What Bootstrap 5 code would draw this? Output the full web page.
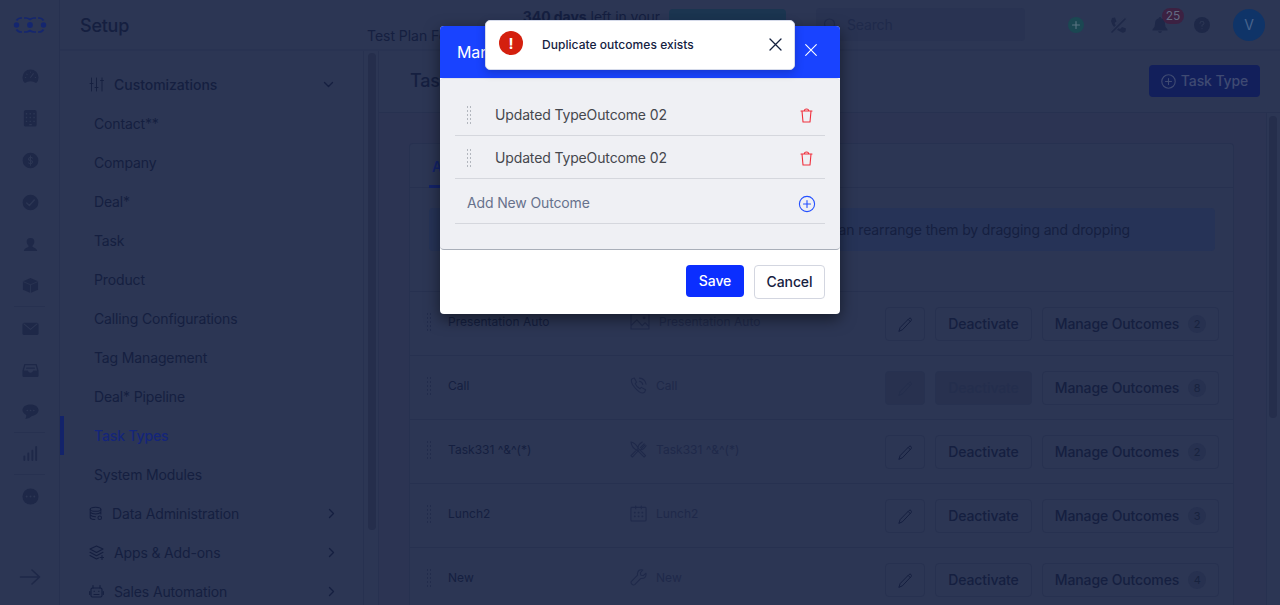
<!DOCTYPE html>
<html lang="en">
<head>
<meta charset="utf-8">
<meta name="viewport" content="width=device-width, initial-scale=1">
<title>Setup - Task Types</title>
<link href="https://cdn.jsdelivr.net/npm/bootstrap@5.3.0/dist/css/bootstrap.min.css" rel="stylesheet">
<style>
:root{--bg:#2c3654;--line:#273150;--ink:#151f40;--dim:#1f294a;--blue:#13236a}
html,body{height:100%}
body{font-family:Inter,"Liberation Sans",sans-serif;font-size:14px;line-height:20px;letter-spacing:-.14px;background:var(--bg);color:var(--ink);overflow:hidden}
svg{display:block;flex:none;fill:none;stroke:currentColor;stroke-width:1.1;stroke-linecap:round;stroke-linejoin:round}
svg .f{fill:currentColor;stroke:none}
svg .c{stroke:var(--bg)}
.rail{width:60px;border-right:1px solid var(--line);color:#1e2848;padding-top:16px}
.rail-item{height:42px;width:31px;padding-left:2px}
.rail-item svg{width:17px;height:17px}
.rail-line{border-bottom:1px solid var(--line)}
.topbar{height:51px;border-bottom:2px solid #293352;padding:0 15px 0 20px}
.page-name{font-size:18px;font-weight:500;width:287px;letter-spacing:-.25px;padding-top:2px}
.plan{width:293px;height:51px;padding-top:8px;line-height:19px;white-space:nowrap;overflow:hidden;letter-spacing:-.04px}
.upgrade{width:117px;height:30px;background:#1b3550;border-radius:4px;margin:0 0 1px 9px}
.search{width:209px;height:33px;margin-left:30px;background:#293352;border-radius:4px;color:#1f2a4b;padding-left:7px;gap:8px}
.bubble{left:10px;top:-9px;width:22px;height:16px;line-height:16px;font-size:12px;background:#3c2142;color:#636b82;border-radius:8px}
.avatar{width:32px;height:32px;background:#0f3468;color:#48638c;margin-left:23px}
.menu{width:304px;padding-top:14px;border-right:1px solid var(--line)}
.menu a{height:39px;color:var(--ink);text-decoration:none;display:flex;align-items:center;padding:0 29px 0 34px}
.menu a.grp{padding-left:29px;padding-right:27px}
.menu a.top-grp{font-weight:500;letter-spacing:-.03px;padding-right:29px}
.menu a.on{color:#14257a;font-weight:500;border-left:4px solid var(--blue);padding-left:30px}
.track{width:15px;border-right:1px solid var(--line);padding:2px 3px 0 4px}
.thumb{width:8px;background:#252e4c;border-radius:4px}
.titlebar{height:62px;padding:0 20px 1px 31px;border-bottom:1px solid var(--line)}
.btn{--bs-btn-font-size:14px;--bs-btn-line-height:20px;--bs-btn-font-weight:500;--bs-btn-border-radius:4px;letter-spacing:-.12px}
.btn-type{background:#121f5b;color:#3f4a72;width:111px;height:32px;padding:0}
.content{background:#2c3453;padding:30px 31px 0 30px}
.panel{background:var(--bg);border:1px solid var(--line);border-bottom:0;width:825px;height:470px;border-radius:4px 4px 0 0}
.tabs{height:44px;border-bottom:1px solid var(--line);padding-left:19px}
.tab-on{height:44px;color:var(--blue);font-weight:600;padding:13px 3px 0;border-bottom:3px solid var(--blue)}
.note{margin:20px 18px 0 19px;height:43px;background:#263357;border-radius:4px;padding-right:85px}
.tr-item{height:64px;border-top:1px solid var(--line);font-size:12px;padding:0 14px 0 15px}
.tr-item .nm{width:182px;padding-bottom:4px;letter-spacing:.03px}
.tr-item .ty{width:254px;color:#1f294a;padding-bottom:4px;gap:9px;letter-spacing:.03px}
.grip{width:5px;height:18px;background:repeating-linear-gradient(to bottom,currentColor 0 2px,transparent 2px 4px);-webkit-mask:linear-gradient(to right,#000 1px,transparent 1px 3px,#000 3px 4px,transparent 4px);mask:linear-gradient(to right,#000 1px,transparent 1px 3px,#000 3px 4px,transparent 4px)}
.btn-row{height:34px;border:1px solid var(--line);color:var(--ink);padding:0;line-height:20px}
.btn-row.off{background:#28314f;color:#242e4d}
.cnt{width:18px;height:18px;line-height:18px;border-radius:9px;background:#273150;font-size:11px;font-weight:400;color:#18233f;margin-left:9px;letter-spacing:0}
.dlg{position:absolute;left:440px;top:26px;width:400px;height:288px;border-radius:4px;background:#fff;box-shadow:0 5px 15px rgba(0,0,0,.5)}
.dlg-head{height:52px;background:#1943ff;color:#fff;font-size:16px;letter-spacing:-.1px;padding:0 23px 0 17px;border-radius:4px 4px 0 0}
.dlg-body{height:172px;background:#eff0f4;border-bottom:1px solid #a9afb9;border-top:1px solid #dfe1ea;border-radius:4px;padding:14px 15px 0}
.oc{height:43px;border-bottom:1px solid #d5d7dd;color:#45474d;padding:1px 12px 0}
.oc.new{height:45px;color:#67728c;padding:4px 9px 0 12px}
.dlg-foot{padding:15px 15px 0;gap:10px}
.btn-save{background:#0b2eff;color:#fff;width:58px;height:32px;padding:0}
.btn-cancel{background:#fff;color:#16213f;border:1px solid #d3d6e0;width:71px;height:34px;padding:0}
.note-toast{position:absolute;left:485px;top:20px;width:310px;height:50px;background:#fff;border:1px solid #d5daea;border-radius:5px;color:#14213f;font-size:12px;font-weight:500;letter-spacing:.04px;padding:0 12px 0 13px;box-shadow:0 3px 8px rgba(10,20,60,.25)}
.bang{width:24px;height:24px;border-radius:50%;background:#d4200e;color:#fff;font-weight:700;font-size:15px;line-height:25px;margin:0 19px 4px 0;letter-spacing:0}
</style>
</head>
<body>
<div class="d-flex h-100">
  <nav class="rail d-flex flex-column align-items-center flex-shrink-0">
    <svg width="34" height="18" viewBox="0 0 34 18" style="color:#14266f"><g stroke-width="1.700" stroke-linecap="butt"><path d="M3.500 4.500Q5 2 8 2h1M11 2h2q2 0 4 1.500q2-1.500 4-1.500h2M25 2h1q3 0 4.500 2.500M3.500 13.500Q5 16 8 16h1M11 16h2q2 0 4-1.500q2 1.500 4 1.500h2M25 16h1q3 0 4.500-2.500"/></g><circle class="f" cx="3.500" cy="9" r="2.700"/><circle class="f" cx="17" cy="9" r="2.900"/><circle class="f" cx="30.500" cy="9" r="2.700"/></svg>
    <div style="height:21px"></div>
    <div class="rail-item d-flex align-items-center justify-content-center"><svg viewBox="0 0 18 18"><path class="f" d="M3 16A8.500 8.500 0 1 1 15 16Q9 12 3 16z"/><path class="c" d="M9 10l3-4M3.500 10h.5M5 6.500l.4.300M9 4.300v.3M14 10h.5"/></svg></div>
    <div class="rail-item d-flex align-items-center justify-content-center"><svg viewBox="0 0 18 18"><rect class="f" x="2" y="0" width="13.500" height="17.500" rx="2"/><path class="c" stroke-dasharray="1.500 2.500" stroke-linecap="butt" stroke-width="1.500" d="M4 4h10M4 8h10M4 12h10"/><path class="c" d="M8 15.500h2"/></svg></div>
    <div class="rail-item d-flex align-items-center justify-content-center"><svg viewBox="0 0 18 18"><circle class="f" cx="9" cy="9" r="8.300"/><path class="c" d="M11 6.500Q10.500 5.500 9 5.500T7 7t2 2 2 2-2 1.500-2-1M9 4v10"/></svg></div>
    <div class="rail-item d-flex align-items-center justify-content-center"><svg viewBox="0 0 18 18"><circle class="f" cx="9" cy="9" r="8.300"/><path class="c" stroke-width="1.500" d="M5 9.500l2.800 2.700L13 6.300"/></svg></div>
    <div class="rail-item d-flex align-items-center justify-content-center"><svg viewBox="0 0 18 18"><path class="f" d="M9 2C6 2 4.500 4 5 7q.4 2 2 3.500c0 2-5 2-5 5.500h14c0-3.500-5-3.500-5-5.500q1.600-1.500 2-3.500c.5-3-1-5-4-5z"/></svg></div>
    <div class="rail-item d-flex align-items-center justify-content-center rail-line"><svg viewBox="0 0 18 18"><path class="f" d="M9 1l8 3.500v9L9 17 1 13.500v-9z"/><path class="c" stroke-width=".8" d="M1.500 5L9 8.200 16.500 5M9 8.200V17"/></svg></div>
    <div class="rail-item d-flex align-items-center justify-content-center"><svg viewBox="0 0 18 18"><rect class="f" x=".5" y="3" width="17" height="13" rx="2"/><path class="c" d="M2 4l7 6 7-6"/></svg></div>
    <div class="rail-item d-flex align-items-center justify-content-center"><svg viewBox="0 0 18 18"><path class="f" d="M2.500 2h13L17.500 9v5.500q0 1.500-1.500 1.500H2q-1.500 0-1.500-1.500V9z"/><path d="M3.500 3.500h11l1.500 5.500h-4q-1 2.500-3 2.500T6 9H2z" style="fill:var(--bg);stroke:none"/><path stroke-width="1.400" d="M5 6.500h8"/></svg></div>
    <div class="rail-item d-flex align-items-center justify-content-center rail-line"><svg viewBox="0 0 18 18"><path class="f" d="M9 1.500c5 0 8.500 2.500 8.500 6s-3.500 6-7 6.200Q8 16.500 3.500 17q1.300-2 1-4.300C2 11.500.5 9.500.5 7.500c0-3.500 3.500-6 8.500-6z"/><path class="c" stroke-width="1.600" d="M5.500 8h.1M9 8h.1M12.500 8h.1"/></svg></div>
    <div class="rail-item d-flex align-items-center justify-content-center rail-line"><svg viewBox="0 0 18 18"><path stroke-width="2" d="M2.500 12v4M6.700 9v7M11 6v10M15 2v14"/></svg></div>
    <div class="rail-item d-flex align-items-center justify-content-center"><svg viewBox="0 0 18 18"><circle class="f" cx="9" cy="9" r="8.500"/><path class="c" stroke-width="2" d="M4.900 9h.1M9 9h.1M13 9h.1"/></svg></div>
    <svg class="mt-auto" style="margin-bottom:19px" width="22" height="18" viewBox="0 0 22 18"><path stroke-width="1.600" d="M1.500 9h19M13 2l7.500 7-7.500 7"/></svg>
  </nav>
  <div class="flex-grow-1 d-flex flex-column" style="min-width:0">
    <header class="topbar d-flex align-items-center flex-shrink-0">
      <div class="page-name">Setup</div>
      <div class="plan"><div class="text-end"><b>340 days</b> left in your</div><div>Test Plan For</div></div>
      <div class="upgrade"></div>
      <div class="search d-flex align-items-center"><svg width="16" height="16" viewBox="0 0 16 16"><circle cx="6.500" cy="7" r="5"/><path d="M10.500 11l4 4"/></svg>Search</div>
      <div class="d-flex align-items-center ms-auto">
        <svg width="16" height="16" viewBox="0 0 16 16" style="color:#1b4752"><circle class="f" cx="8" cy="8" r="8"/><path d="M4.500 8h7M8 4.500v7" style="stroke:#5a7482"/></svg>
        <svg width="17" height="16" viewBox="0 0 17 16" style="color:#1e2848;margin-left:26px"><path class="f" d="M2 1l3-.5 1.500 4-2 1.500q2 4.500 5.500 6l2-2 4 1.500-.5 3Q14 16 12 15.500 3 12 1 4z"/><path stroke="#2c3654" stroke-width="4" d="M2 15L15 2"/><path stroke-width="1.600" d="M2 15L15 2"/></svg>
        <div class="position-relative" style="margin-left:25px;color:#1e2848"><svg width="16" height="16" viewBox="0 0 16 16"><path class="f" d="M8 0q1 0 1.200 1.200Q13 2 13 7q0 3.500 2.500 5.500v1H.5v-1Q3 10.500 3 7q0-5 3.800-5.800Q7 0 8 0zM6 14.200h4Q9.500 16 8 16t-2-1.800z"/></svg><span class="bubble position-absolute text-center">25</span></div>
        <svg width="16" height="16" viewBox="0 0 16 16" style="color:#1e2848;margin-left:26px"><circle class="f" cx="8" cy="8" r="8"/><path class="c" d="M6 6.300Q6 4.500 8 4.500t2 1.700Q10 7.300 8 8.200v1M8 11.500v.2"/></svg>
        <div class="avatar rounded-circle d-flex align-items-center justify-content-center">V</div>
      </div>
    </header>
    <div class="d-flex flex-grow-1" style="min-height:0">
      <aside class="menu flex-shrink-0">
        <a class="grp top-grp"><svg width="15" height="15" viewBox="0 0 15 15" style="margin-right:10px"><path stroke-width=".9" d="M2.500 1v13M7.500 1v13M13 1v13M1 6.500h3M6 10.500h3M11.500 3.500h3"/></svg>Customizations<svg class="ms-auto" width="11" height="11" viewBox="0 0 11 11"><path stroke-width="1.300" d="M1.500 3.500l4 4 4-4"/></svg></a>
        <a>Contact**</a><a>Company</a><a>Deal*</a><a>Task</a><a>Product</a><a>Calling Configurations</a><a>Tag Management</a><a>Deal* Pipeline</a><a class="on">Task Types</a><a>System Modules</a>
        <a class="grp"><svg width="14" height="15" viewBox="0 0 15 15" style="margin-right:9px"><ellipse cx="7" cy="3" rx="5.700" ry="2.200"/><path d="M1.300 3v9q1 2 5 2M12.700 3v5M1.300 6q1.500 2 5.700 2t5.700-2M1.300 9q1.500 2 5.700 2"/><circle cx="11.500" cy="12" r="1.900"/></svg>Data Administration<svg class="ms-auto" width="9" height="11" viewBox="0 0 9 11"><path stroke-width="1.300" d="M2.500 1.500l4 4-4 4"/></svg></a>
        <a class="grp"><svg width="15" height="15" viewBox="0 0 15 15" style="margin-right:10px"><path d="M7.500 1l6.500 3-6.500 3.500L1 4zM1 7.300l6.500 3.500L14 7.300M1 10.500L7.500 14l2-1M13 10.500v4M11 12.500h4"/></svg>Apps &amp; Add-ons<svg class="ms-auto" width="9" height="11" viewBox="0 0 9 11"><path stroke-width="1.300" d="M2.500 1.500l4 4-4 4"/></svg></a>
        <a class="grp"><svg width="15" height="15" viewBox="0 0 15 15" style="margin-right:10px"><rect x="2" y="4" width="11" height="9" rx="1.500"/><path d="M4 4V1.500M11 4V1.500M.7 7.500v3M14.300 7.500v3M5 10.500h5M5 7.300h.5M9.500 7.300h.5"/></svg>Sales Automation<svg class="ms-auto" width="9" height="11" viewBox="0 0 9 11"><path stroke-width="1.300" d="M2.500 1.500l4 4-4 4"/></svg></a>
      </aside>
      <div class="track flex-shrink-0"><div class="thumb" style="height:477px"></div></div>
      <main class="flex-grow-1 d-flex flex-column" style="min-width:0">
        <div class="titlebar d-flex align-items-center justify-content-between flex-shrink-0">
          <div style="font-size:18px;font-weight:500;padding-bottom:1px">Task Types</div>
          <button class="btn btn-type d-flex align-items-center justify-content-center"><svg width="15" height="15" viewBox="0 0 15 15" style="margin-right:5px"><circle cx="7.500" cy="7.500" r="6.700"/><path d="M4.500 7.500h6M7.500 4.500v6"/></svg>Task Type</button>
        </div>
        <div class="d-flex flex-grow-1" style="min-height:0">
          <div class="content flex-grow-1 overflow-hidden">
            <div class="panel">
              <div class="tabs d-flex"><div class="tab-on">Active</div></div>
              <div class="note d-flex align-items-center justify-content-end">You can rearrange them by dragging and dropping</div>
              <div style="height:40px"></div>
              <div id="rows"></div>
            </div>
          </div>
          <div class="track flex-shrink-0" style="border-left:1px solid var(--line);border-right:0;padding:3px 0 0 2px;width:14px"><div class="thumb" style="height:302px"></div></div>
        </div>
      </main>
    </div>
  </div>
</div>

<div class="dlg">
  <div class="dlg-head d-flex align-items-center justify-content-between">Manage Outcomes<svg width="12" height="12" viewBox="0 0 12 12" style="margin-bottom:4px"><path stroke-width="1.100" d="M.7.700l10.600 10.600M11.300.700L.7 11.300"/></svg></div>
  <div class="dlg-body">
    <div class="oc d-flex align-items-center"><span class="grip" style="color:#b3b7be;margin-right:23px"></span>Updated TypeOutcome 02<svg class="ms-auto" width="13" height="15" viewBox="0 0 13 15" style="color:#f0303d;margin-top:2px"><path d="M1 3h11M4.300 3Q4.300 1 6.500 1t2.200 2M2 3l1 11h7l1-11"/></svg></div>
    <div class="oc d-flex align-items-center"><span class="grip" style="color:#b3b7be;margin-right:23px"></span>Updated TypeOutcome 02<svg class="ms-auto" width="13" height="15" viewBox="0 0 13 15" style="color:#f0303d;margin-top:2px"><path d="M1 3h11M4.300 3Q4.300 1 6.500 1t2.200 2M2 3l1 11h7l1-11"/></svg></div>
    <div class="oc new d-flex align-items-center">Add New Outcome<svg class="ms-auto" width="18" height="18" viewBox="0 0 18 18" style="color:#2450ff;margin-top:1px"><circle cx="9" cy="9" r="7.600"/><path d="M5.500 9h7M9 5.500v7"/></svg></div>
  </div>
  <div class="dlg-foot d-flex justify-content-end"><button class="btn btn-save">Save</button><button class="btn btn-cancel">Cancel</button></div>
</div>

<div class="note-toast d-flex align-items-center"><span class="bang text-center">!</span>Duplicate outcomes exists<svg class="ms-auto" width="13" height="13" viewBox="0 0 13 13" style="margin-bottom:1px"><path stroke-width="1.300" d="M1 1l11 11M12 1L1 12"/></svg></div>

<script>
const icons = {
  image: '<svg width="20" height="17" viewBox="0 0 20.500 17.500"><path d="M1 1h18.500v15.500H1zM1 13l6-6 5.500 6 3-3 4 4"/><circle class="f" cx="14.500" cy="5" r="1.500"/></svg>',
  call: '<svg width="17" height="17" viewBox="0 0 18 18"><path d="M2 2l2.500-1L7 5.500 5.500 7q1.500 3.500 5 5.500l1.500-1.500 4.500 2.500-1 2.500q-2.500 2-6-.500T3 8.500Q.5 4.500 2 2zM10 4.500q3 .5 3.500 3.500M10 1.200q6 .5 7 6.500"/></svg>',
  food: '<svg width="17" height="17" viewBox="0 0 18 18"><path d="M1 1q5 1 8 7l7.500 7.500-1.500 1.500L8 10Q2 8 1 1zM10 9L2.500 17 1 15.500 8.500 8Q8 4 13 1M17 5q-3 5-7 4M15 3l-4 4M16 4l-4 4"/></svg>',
  calendar: '<svg width="17" height="17" viewBox="0 0 18 18"><rect x="1" y="2.500" width="16" height="14.500" rx="1"/><path d="M6 1v3M12 1v3"/><path stroke-width="1.800" d="M5 8h.2M9 8h.2M13 8h.2M5 12h.2M9 12h.2M13 12h.2"/></svg>',
  wrench: '<svg width="17" height="17" viewBox="0 0 18 18"><path d="M13.500 1Q9 0 8 4q-.3 1 0 2.500L1.500 13q-1 1.500.5 3t3 .5l6.500-6.500q6 .5 5.500-5.500l-3 2.500-2.500-.5-.5-2.500z"/></svg>'
};
const pen = '<svg width="15" height="15" viewBox="0 0 15 15"><path stroke-width="1" d="M1 14l1.200-3.500L11 1.500q1.200-.8 2 0t.2 2L4.700 12.500zM10.200 2.500l2.200 2.200"/></svg>';
const rows = [['Presentation Auto','image',2],['Call','call',8,1],['Task331 ^&amp;^(*)','food',2],['Lunch2','calendar',3],['New','wrench',4]];
document.getElementById('rows').innerHTML = rows.map(([n,i,c,off]) => `
<div class="tr-item d-flex align-items-center">
  <span class="grip" style="color:#222c4c;margin:0 16px 4px 2px"></span>
  <div class="nm">${n}</div>
  <div class="ty d-flex align-items-center">${icons[i]}${n}</div>
  <div class="d-flex ms-auto" style="gap:10px;padding-top:1px">
    <button class="btn btn-row ${off?'off':''} d-flex align-items-center justify-content-center" style="width:40px">${pen}</button>
    <button class="btn btn-row ${off?'off':''}" style="width:97px">Deactivate</button>
    <button class="btn btn-row d-flex align-items-center justify-content-center" style="width:177px">Manage Outcomes<span class="cnt">${c}</span></button>
  </div>
</div>`).join('');
</script>
<script src="https://cdn.jsdelivr.net/npm/bootstrap@5.3.0/dist/js/bootstrap.bundle.min.js"></script>
</body>
</html>
